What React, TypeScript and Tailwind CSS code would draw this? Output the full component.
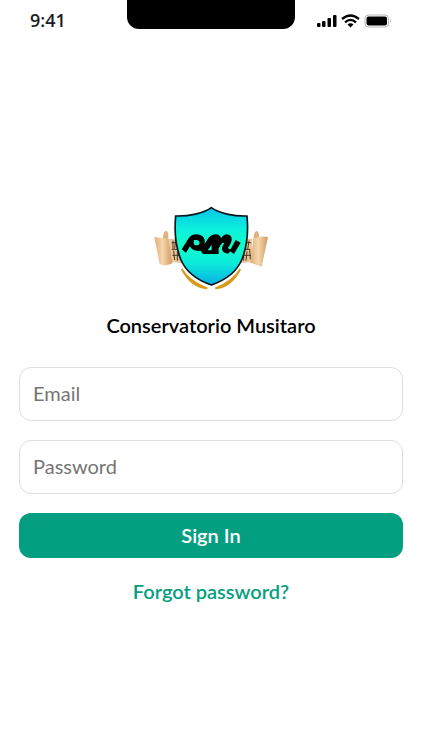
function SchoolCrest() {
  return (
    <svg viewBox="3 0 390 285" className="w-[130px]" role="img" aria-label="Conservatorio Musitaro crest">
      <defs>
        <linearGradient id="shield" x1="0" y1="0" x2="0" y2="1">
          <stop offset="0" stopColor="#08c4ea" />
          <stop offset="0.28" stopColor="#0cf0dc" />
          <stop offset="0.5" stopColor="#10ffc8" />
          <stop offset="0.72" stopColor="#0ceadc" />
          <stop offset="1" stopColor="#08b0e0" />
        </linearGradient>
        <linearGradient id="scroll" x1="0" y1="0" x2="1" y2="0">
          <stop offset="0" stopColor="#dcb07c" />
          <stop offset="0.45" stopColor="#f6d6ab" />
          <stop offset="1" stopColor="#cf9a64" />
        </linearGradient>
      </defs>

      {/* sheet music behind the shield */}
      <path d="M72 117 L110 114 L112 190 L78 186Z M322 117 L286 114 L284 190 L320 186Z" fill="#e9c79c" />
      <path
        d="M80 128 h24 M80 148 h26 M82 166 h26 M84 122 v24 M92 120 l-3 26 M100 124 v30 M86 152 l3 28 M97 154 v28 M106 150 v30 M290 128 h28 M288 148 h28 M290 166 h28 M312 122 l-4 26 M300 120 v28 M292 130 v24 M296 152 v30 M306 154 l-3 28 M314 150 l2 28"
        fill="none"
        stroke="#4b3523"
        strokeWidth="3"
      />
      <path d="M54 112 Q55 94 63 92 Q71 94 70 114 L80 184 L56 196Z" fill="#dfb27e" />
      <path d="M343 112 Q342 94 335 93 Q326 95 326 114 L318 184 L338 196Z" fill="#dfb27e" />
      <path d="M28 111 L70 116 L82 190 Q62 201 44 193Z" fill="url(#scroll)" />
      <path d="M369 111 Q346 107 326 115 L316 188 L350 200Z" fill="url(#scroll)" />

      {/* laurels */}
      <path d="M110 207 Q132 244 187 265 Q140 263 110 207Z" fill="#d99b1c" stroke="#d99b1c" strokeWidth="5" />
      <path d="M286 207 Q264 244 211 265 Q257 263 286 207Z" fill="#d99b1c" stroke="#d99b1c" strokeWidth="5" />

      <path
        d="M199 23 C176 40 132 49 92 48 C87 100 94 146 108 180 C125 219 158 241 199 255 C240 241 273 219 290 180 C304 146 311 100 306 48 C266 49 222 40 199 23Z"
        fill="url(#shield)"
        stroke="#071418"
        strokeWidth="5"
      />

      {/* monogram */}
      <path
        fillRule="evenodd"
        d="M110 148 L131 115 Q139 103 154 103 Q174 104 179 119 V131 L192 112 Q200 103 212 103 Q226 104 228 115 Q236 103 246 103 Q262 105 260 121 Q259 129 253 137 L249 144 Q251 148 258 148 L252 160 Q234 162 231 148 Q230 141 238 129 Q232 127 227 135 L221 145 V162 H174 L167 152 H156 Q140 151 135 139 L123 158Z
          M147 120 H156 Q164 122 164 128 Q163 136 155 136 Q147 136 146 128Z
          M200 134 L188 151 H200Z"
      />
      <path d="M254 153 L272 120 L287 128 L267 162Z" />
    </svg>
  );
}

function StatusIcons() {
  return (
    <svg viewBox="0 0 76 14" className="h-[14px] w-[76px]" aria-hidden="true">
      <rect x="1" y="9" width="3.500" height="4" rx="1" />
      <rect x="6" y="7" width="3.500" height="6" rx="1" />
      <rect x="11.500" y="4" width="3.500" height="9" rx="1" />
      <rect x="17" y="1" width="3.500" height="12" rx="1" />
      <g fill="none" stroke="#000" strokeWidth="2.3">
        <path d="M26 5 Q34.500 -2 43 5" />
        <path d="M29 8.300 Q34.500 3.500 40 8.300" />
      </g>
      <path d="M31.500 10.500 Q34.500 8 37.500 10.500 L34.500 13.500Z" />
      <rect x="49" y="1" width="23.500" height="12" rx="3.500" fill="none" stroke="#b5b5b5" />
      <rect x="50.500" y="2.500" width="20.500" height="9" rx="2" />
      <path d="M74 5 Q76 7 74 9Z" fill="#b5b5b5" />
    </svg>
  );
}

export default function App() {
  return (
    <div className="min-h-screen bg-white font-[Lato,sans-serif] text-black">
      <header className="grid grid-cols-[1fr_168px_1fr]">
        <div className="pt-2 pl-[30px] font-['Open_Sans',sans-serif] text-lg leading-6 font-semibold text-[#1c1c22]">9:41</div>
        <div className="h-[29px] rounded-b-xl bg-black" />
        <div className="flex pt-[14px] pl-[21px]">
          <StatusIcons />
        </div>
      </header>

      <main className="flex flex-col items-center px-[19px] pt-[168px]">
        <SchoolCrest />
        <h1 className="mt-[18px] text-xl leading-6 font-semibold">Conservatorio Musitaro</h1>

        <form className="mt-[30px] flex w-full flex-col gap-[19px]" onSubmit={(e) => e.preventDefault()}>
          <input
            type="email"
            aria-label="Email"
            placeholder="Email"
            className="h-[54px] w-full rounded-xl border border-[#dedede] px-[13px] pb-[2px] text-xl placeholder:text-[#757575] focus:outline-none focus:ring-2 focus:ring-[#049f80]"
          />
          <input
            type="password"
            aria-label="Password"
            placeholder="Password"
            className="h-[54px] w-full rounded-xl border border-[#dedede] px-[13px] pb-[2px] text-xl placeholder:text-[#757575] focus:outline-none focus:ring-2 focus:ring-[#049f80]"
          />
          <button type="submit" className="h-[45px] w-full rounded-xl bg-[#049f80] pb-[2px] text-xl font-semibold text-white">
            Sign In
          </button>
        </form>

        <a href="#forgot" className="mt-[21px] text-xl leading-6 font-semibold text-[#049f80]">
          Forgot password?
        </a>
      </main>
    </div>
  );
}
